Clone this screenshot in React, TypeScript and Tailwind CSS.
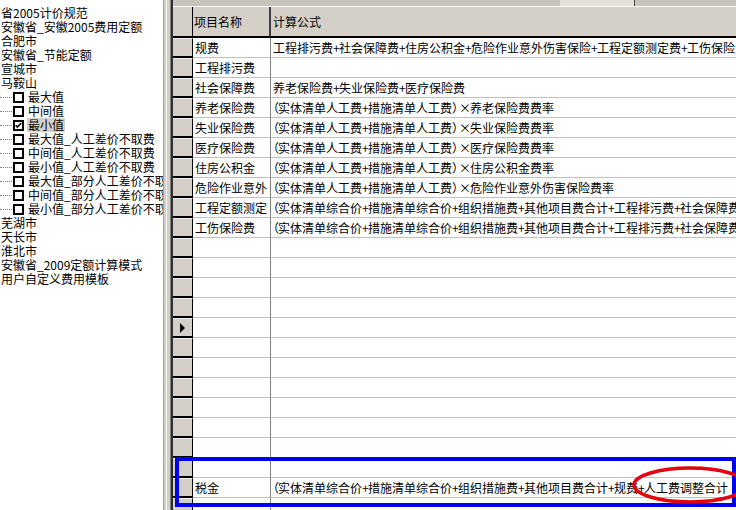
import React from "react";

const FONT = { fontFamily: '"Noto Sans CJK SC", "Noto Sans", sans-serif' };

type TreeItem = { text: string; check?: boolean; checked?: boolean; selected?: boolean };

const tree: TreeItem[] = [
  { text: "省2005计价规范" },
  { text: "安徽省_安徽2005费用定额" },
  { text: "合肥市" },
  { text: "安徽省_节能定额" },
  { text: "宣城市" },
  { text: "马鞍山" },
  { text: "最大值", check: true },
  { text: "中间值", check: true },
  { text: "最小值", check: true, checked: true, selected: true },
  { text: "最大值_人工差价不取费", check: true },
  { text: "中间值_人工差价不取费", check: true },
  { text: "最小值_人工差价不取费", check: true },
  { text: "最大值_部分人工差价不取费", check: true },
  { text: "中间值_部分人工差价不取费", check: true },
  { text: "最小值_部分人工差价不取费", check: true },
  { text: "芜湖市" },
  { text: "天长市" },
  { text: "淮北市" },
  { text: "安徽省_2009定额计算模式" },
  { text: "用户自定义费用模板" },
];

const rg = "（实体清单人工费+措施清单人工费）×";
const zh = "（实体清单综合价+措施清单综合价+组织措施费+其他项目费合计+";

const rows: { name: string; formula: string; arrow?: boolean }[] = [
  { name: "规费", formula: "工程排污费+社会保障费+住房公积金+危险作业意外伤害保险+工程定额测定费+工伤保险费" },
  { name: "工程排污费", formula: "" },
  { name: "社会保障费", formula: "养老保险费+失业保险费+医疗保险费" },
  { name: "养老保险费", formula: rg + "养老保险费费率" },
  { name: "失业保险费", formula: rg + "失业保险费费率" },
  { name: "医疗保险费", formula: rg + "医疗保险费费率" },
  { name: "住房公积金", formula: rg + "住房公积金费率" },
  { name: "危险作业意外", formula: rg + "危险作业意外伤害保险费率" },
  { name: "工程定额测定", formula: zh + "工程排污费+社会保障费+住房公积金" },
  { name: "工伤保险费", formula: zh + "工程排污费+社会保障费+住房公积金" },
  { name: "", formula: "" },
  { name: "", formula: "" },
  { name: "", formula: "" },
  { name: "", formula: "" },
  { name: "", formula: "", arrow: true },
  { name: "", formula: "" },
  { name: "", formula: "" },
  { name: "", formula: "" },
  { name: "", formula: "" },
  { name: "", formula: "" },
  { name: "", formula: "" },
  { name: "", formula: "" },
  { name: "税金", formula: zh + "规费+人工费调整合计" },
  { name: "", formula: "" },
];

function Formula({ text }: { text: string }) {
  const out: React.ReactNode[] = [];
  let buf = "";
  const flush = () => {
    if (buf) {
      out.push(<span key={out.length}>{buf}</span>);
      buf = "";
    }
  };
  for (const c of text) {
    if (c === "+") {
      flush();
      out.push(
        <span key={out.length} className="inline-block w-[6px] text-center">
          +
        </span>
      );
    } else if (c === "（") {
      flush();
      out.push(
        <span key={out.length} className="inline-block w-[5px]">
          <span className="inline-block ml-[-6px]">（</span>
        </span>
      );
    } else if (c === "）") {
      flush();
      out.push(
        <span key={out.length} className="inline-block w-[7px]">
          ）
        </span>
      );
    } else if (c === "×") {
      flush();
      out.push(
        <span key={out.length} className="inline-block w-[11px] text-center">
          ×
        </span>
      );
    } else {
      buf += c;
    }
  }
  flush();
  return <span className="whitespace-nowrap">{out}</span>;
}

function Checkbox({ checked }: { checked?: boolean }) {
  return (
    <div className="w-[11px] h-[11px] border-2 border-black bg-white flex items-center justify-center shrink-0">
      {checked && (
        <svg width="9" height="9" viewBox="0 0 9 9">
          <path d="M1 4 L3 6.5 L8 1.5" stroke="black" strokeWidth="2" fill="none" />
        </svg>
      )}
    </div>
  );
}

export default function App() {
  return (
    <div className="w-[736px] h-[510px] flex overflow-hidden bg-white text-black text-[12px]" style={FONT}>
      {/* left tree */}
      <div className="w-[163px] h-full bg-white overflow-hidden pt-[6px] shrink-0">
        {tree.map((it, i) =>
          it.check ? (
            <div key={i} className="h-[14px] flex items-center whitespace-nowrap leading-[14px]">
              <div className="w-[12px] border-t border-dotted border-[#808080] mr-[1px] shrink-0" />
              <Checkbox checked={it.checked} />
              <span className={"ml-[3px] px-[1px] " + (it.selected ? "bg-[#d4d0c8]" : "")}>{it.text}</span>
            </div>
          ) : (
            <div key={i} className="h-[14px] leading-[14px] whitespace-nowrap pl-[1px]">
              {it.text}
            </div>
          )
        )}
      </div>
      {/* splitter */}
      <div className="w-[10px] h-full flex shrink-0">
        <div className="w-[1px] bg-[#a0a0a0]" />
        <div className="w-[2px] bg-[#d4d0c8]" />
        <div className="w-[1px] bg-[#f4f4f0]" />
        <div className="w-[3px] bg-[#d4d0c8]" />
        <div className="w-[1px] bg-[#808080]" />
        <div className="w-[2px] bg-[#303030]" />
      </div>
      {/* grid */}
      <div className="relative flex-1 h-full flex flex-col overflow-hidden">
        <div className="h-[6px] flex bg-[#c8c4bc] shrink-0">
          <div className="w-[387px]" />
          <div className="w-[75px] bg-[#e4e2dc] border-r border-[#404040]" />
        </div>
        {/* header */}
        <div className="h-[32px] flex shrink-0 border-b-2 border-black bg-[#d4d0c8] border-t border-t-white">
          <div className="w-[20px] border-r border-black" />
          <div className="w-[78px] border-r-2 border-[#404040] flex items-center pl-[1px]">项目名称</div>
          <div className="flex-1 flex items-center pl-[2px]">计算公式</div>
        </div>
        {rows.map((r, i) => (
          <div key={i} className="h-[20px] flex shrink-0">
            <div className="w-[20px] bg-[#d4d0c8] border-r border-black border-b-2 border-b-black border-t border-t-[#f0f0f0] flex items-center pl-[7px]">
              {r.arrow && (
                <svg width="6" height="10" viewBox="0 0 6 10">
                  <path d="M0 0 L5 5 L0 10 Z" fill="black" />
                </svg>
              )}
            </div>
            <div className="w-[78px] border-r border-[#808080] border-b border-b-[#c0c0c0] pl-[2px] flex items-center whitespace-nowrap overflow-hidden">
              {r.name}
            </div>
            <div className="flex-1 border-b border-[#c0c0c0] pl-[2px] flex items-center whitespace-nowrap overflow-hidden">
              {r.formula && <Formula text={r.formula} />}
            </div>
          </div>
        ))}
        {/* blue highlight box */}
        <div className="absolute left-[2px] top-[457px] w-[561px] h-[50px] border-4 border-[#0000f0]" />
        {/* red ellipse */}
        <svg className="absolute left-[459px] top-[466px]" width="120" height="38" viewBox="0 0 120 38">
          <ellipse cx="58" cy="19" rx="56" ry="17" fill="none" stroke="#e60012" strokeWidth="3.5" />
        </svg>
      </div>
    </div>
  );
}
